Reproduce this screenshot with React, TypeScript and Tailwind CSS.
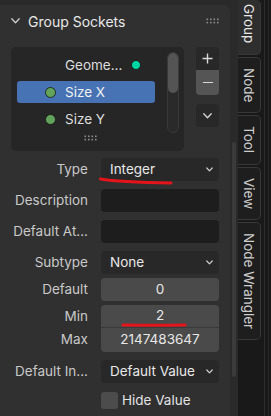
import React from "react";

function Chevron({ className = "" }: { className?: string }) {
  return (
    <svg width="9" height="6" viewBox="0 0 9 6" className={className}>
      <path d="M0.8 0.8 L4.5 4.8 L8.2 0.8" fill="none" stroke="currentColor" strokeWidth="1.3" strokeLinecap="round" strokeLinejoin="round" />
    </svg>
  );
}

function SmallChevron() {
  return (
    <svg width="7" height="5" viewBox="0 0 7 5" className="text-[#cfcfcf]">
      <path d="M0.8 1 L3.5 3.8 L6.2 1" fill="none" stroke="currentColor" strokeWidth="1.2" strokeLinecap="round" strokeLinejoin="round" />
    </svg>
  );
}

function Grip() {
  return (
    <svg width="14" height="6" viewBox="0 0 14 6">
      {[0, 1, 2, 3].map((i) => (
        <g key={i} fill="#8c8c8c">
          <rect x={i * 3.5 + 0.5} y="0.5" width="1.6" height="1.6" />
          <rect x={i * 3.5 + 0.5} y="3.8" width="1.6" height="1.6" />
        </g>
      ))}
    </svg>
  );
}

function Row({ label, children }: { label: string; children: React.ReactNode }) {
  return (
    <div className="flex h-[23px] items-center">
      <span className="w-[88px] shrink-0 whitespace-nowrap text-right leading-normal text-[#c9c9c9]">{label}</span>
      <div className="ml-[13px] h-full w-[118px]">{children}</div>
    </div>
  );
}

function Dropdown({ value }: { value: string }) {
  return (
    <div className="flex h-full items-center justify-between rounded-[4px] bg-[#282828] pl-[9px] pr-[6px] text-[#e8e8e8]">
      <span className="leading-normal">{value}</span>
      <SmallChevron />
    </div>
  );
}

function Tab({ label, first = false }: { label: string; first?: boolean }) {
  return (
    <div
      className={
        "flex w-[23px] shrink-0 justify-center rounded-r-[5px] border-r border-[#383838] " +
        (first
          ? "h-[55px] items-end border-b bg-[#2e2e2e] pb-[11px] text-[#e6e6e6]"
          : "border-y bg-[#1e1e1e] py-[10px] text-[#cdcdcd]")
      }
    >
      <span className="whitespace-nowrap leading-normal [writing-mode:vertical-rl]">{label}</span>
    </div>
  );
}

export default function App() {
  return (
    <div className="relative flex h-[416px] w-[271px] overflow-hidden bg-[#2a2a2a] font-['Inter',sans-serif] text-[13.5px] leading-none">
      {/* Properties column */}
      <div className="w-[230px] shrink-0 pt-[5px]">
        <div className="h-full rounded-tr-[7px] bg-[#303030]">
          {/* Panel header */}
          <div className="flex h-[32px] items-center pl-[11px] pr-[10px]">
            <Chevron className="text-[#cccccc]" />
            <span className="ml-[8px] text-[14px] leading-normal text-[#e8e8e8]">Group Sockets</span>
            <div className="ml-auto">
              <Grip />
            </div>
          </div>

          {/* Socket list + buttons */}
          <div className="mt-[10px] flex pl-[11px]">
            <div className="flex h-[104px] w-[173px] rounded-[5px] bg-[#262626] pl-[6px] pr-[5px]">
              <div className="flex w-[138px] flex-col pt-[7px]">
                <div className="flex h-[22px] items-center pl-[48px] text-[#dedede]">
                  <span className="leading-normal">Geome...</span>
                  <span className="ml-[9px] h-[10px] w-[10px] rounded-full border border-[#1c1c1c] bg-[#00d6a3]" />
                </div>
                <div className="mt-[5px] flex h-[22px] items-center rounded-[3px] bg-[#4772b3] pl-[28px] text-[#f2f2f2]">
                  <span className="h-[11px] w-[11px] rounded-full border border-[#1f2a1f] bg-[#62a45b]" />
                  <span className="ml-[9px] leading-normal">Size X</span>
                </div>
                <div className="mt-[5px] flex h-[22px] items-center pl-[28px] text-[#dedede]">
                  <span className="h-[11px] w-[11px] rounded-full border border-[#1c1c1c] bg-[#62a45b]" />
                  <span className="ml-[9px] leading-normal">Size Y</span>
                </div>
                <div className="mt-[5px] flex justify-center pl-[10px]">
                  <Grip />
                </div>
              </div>
              <div className="ml-[12px] mt-[5px] h-[81px] w-[12px] rounded-full border border-[#3a3a3a] bg-[#2a2a2a]">
                <div className="h-[40px] w-full rounded-full bg-[#545454]" />
              </div>
            </div>

            <div className="ml-[12px] flex w-[23px] flex-col">
              <div className="flex h-[23px] items-center justify-center rounded-t-[4px] bg-[#282828]">
                <svg width="11" height="11" viewBox="0 0 11 11">
                  <path d="M5.5 0.5 V10.5 M0.5 5.5 H10.5" stroke="#d8d8d8" strokeWidth="1.4" />
                </svg>
              </div>
              <div className="flex h-[25px] items-center justify-center rounded-b-[4px] bg-[#555555]">
                <span className="h-[1.5px] w-[10px] bg-[#d8d8d8]" />
              </div>
              <div className="mt-[9px] flex h-[23px] items-center justify-center rounded-[4px] bg-[#282828]">
                <Chevron className="text-[#d8d8d8]" />
              </div>
            </div>
          </div>

          {/* Socket properties */}
          <div className="mt-[7px] flex flex-col">
            <Row label="Type">
              <Dropdown value="Integer" />
            </Row>
            <div className="mt-[8px]">
              <Row label="Description">
                <div className="h-full rounded-[4px] bg-[#1d1d1d]" />
              </Row>
            </div>
            <div className="mt-[8px]">
              <Row label="Default At...">
                <div className="h-full rounded-[4px] bg-[#1d1d1d]" />
              </Row>
            </div>
            <div className="mt-[8px]">
              <Row label="Subtype">
                <Dropdown value="None" />
              </Row>
            </div>
            <div className="mt-[4px]">
              <Row label="Default">
                <div className="flex h-full items-center justify-center rounded-[4px] bg-[#4a4a4a] text-[#e8e8e8]">0</div>
              </Row>
            </div>
            <div className="mt-[4px]">
              <Row label="Min">
                <div className="flex h-full items-center justify-center rounded-t-[4px] border-b border-[#3a3a3a] bg-[#4a4a4a] text-[#e8e8e8]">
                  2
                </div>
              </Row>
            </div>
            <Row label="Max">
              <div className="flex h-[24px] items-center justify-center rounded-b-[4px] bg-[#4a4a4a] text-[#e8e8e8]">
                2147483647
              </div>
            </Row>
            <div className="mt-[9px]">
              <Row label="Default In...">
                <Dropdown value="Default Value" />
              </Row>
            </div>
            <div className="mt-[7px] flex items-center pl-[101px]">
              <span className="h-[17px] w-[17px] rounded-[3px] bg-[#4c4c4c]" />
              <span className="ml-[4px] leading-normal text-[#e4e4e4]">Hide Value</span>
            </div>
          </div>
        </div>
      </div>

      {/* Region scrollbar gutter */}
      <div className="w-[8px] shrink-0 pl-[2px] pt-[142px]">
        <div className="h-[235px] w-[4px] rounded-full bg-[#3b3b3b]" />
      </div>

      {/* Sidebar tabs */}
      <div className="flex flex-1 bg-[#191919]">
        <div className="flex w-[23px] flex-col gap-[2px] text-[13.5px]">
          <Tab label="Group" first />
          <Tab label="Node" />
          <Tab label="Tool" />
          <Tab label="View" />
          <Tab label="Node Wrangler" />
        </div>
        <div className="ml-[3px] w-px bg-[#2c2c2c]" />
        <div className="ml-[3px] w-px bg-[#262626]" />
      </div>

      {/* Red hand-drawn annotations */}
      <svg className="pointer-events-none absolute left-0 top-0" width="271" height="416">
        <path d="M100.5 179 C 118 182, 142 182.5, 171 183" fill="none" stroke="#e3141b" strokeWidth="3" strokeLinecap="round" />
        <path d="M123 325 C 145 325.5, 165 325.5, 185 325" fill="none" stroke="#e3141b" strokeWidth="3" strokeLinecap="round" />
      </svg>
    </div>
  );
}
